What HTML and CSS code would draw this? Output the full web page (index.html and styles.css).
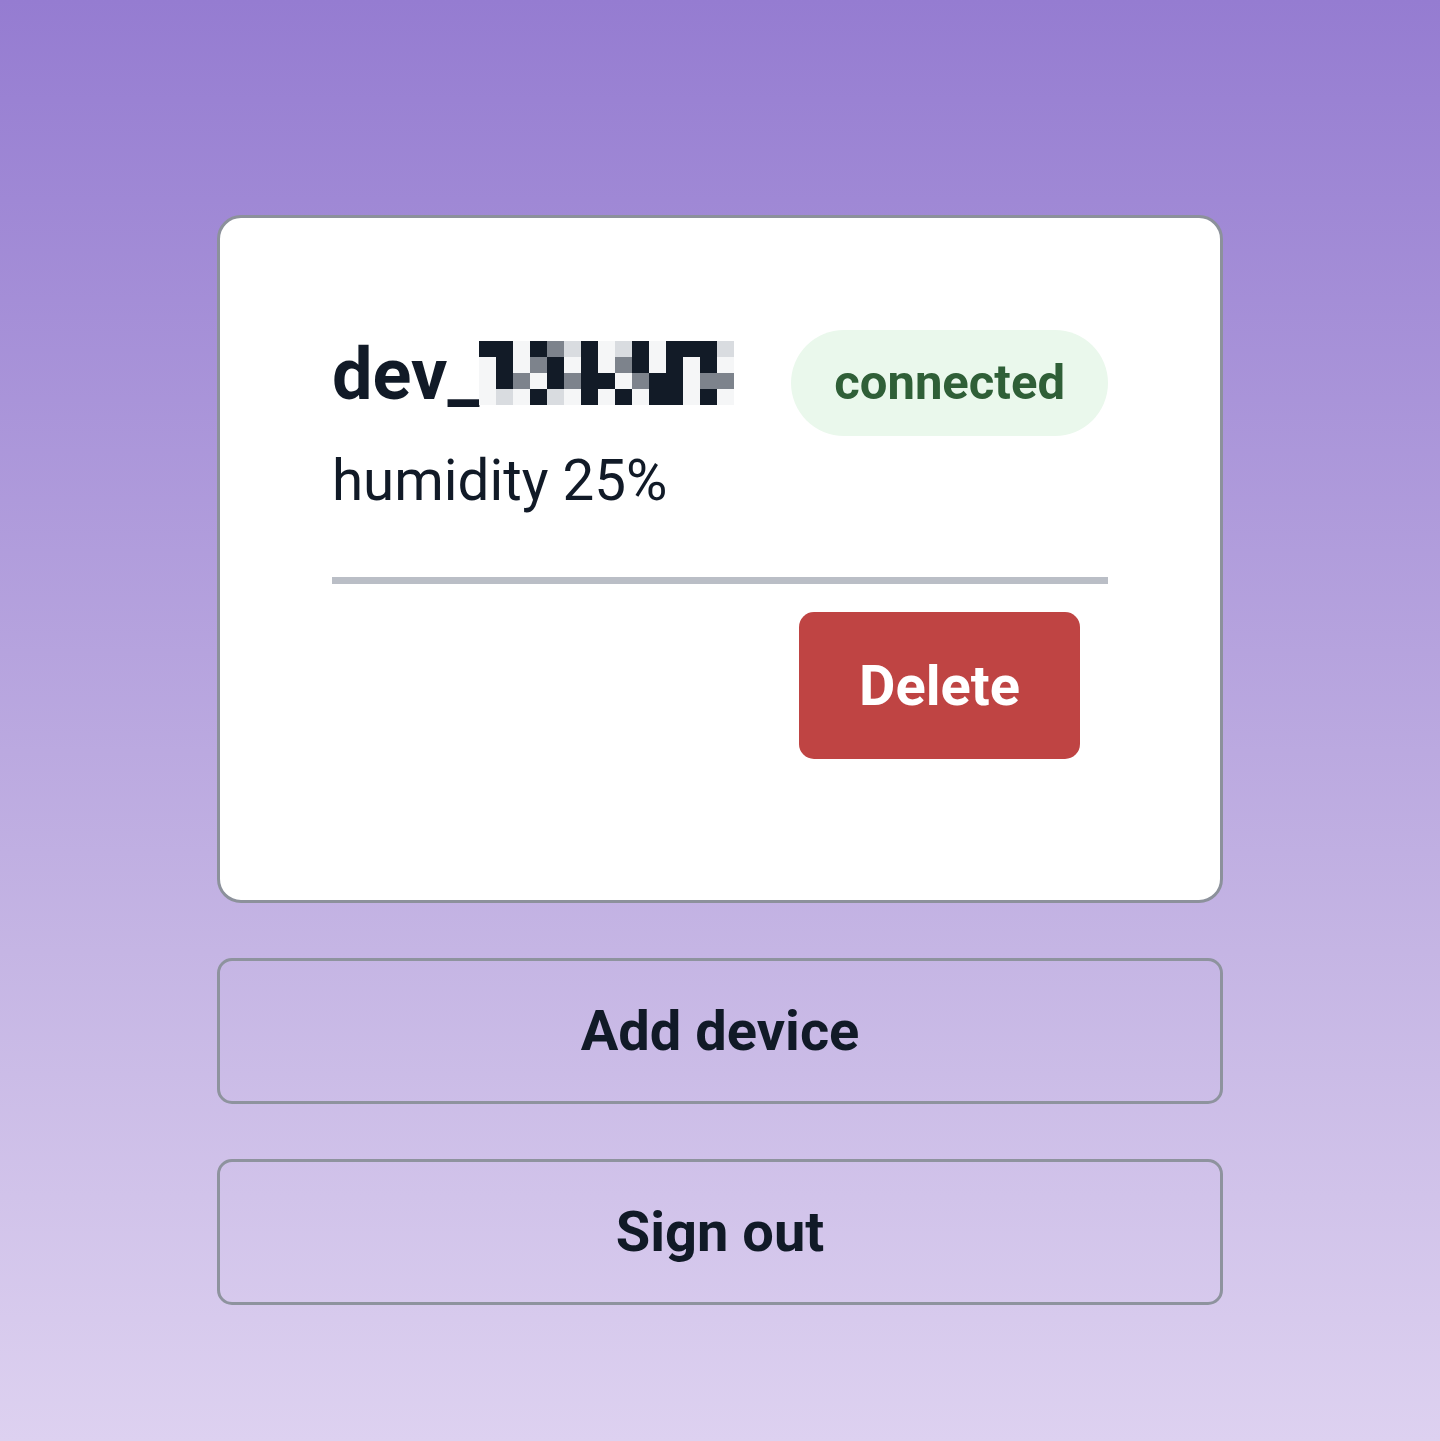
FILE: index.html
```html
<!DOCTYPE html>
<html lang="en">
<head>
<meta charset="utf-8">
<title>Devices</title>
<link rel="stylesheet" href="styles.css">
</head>
<body>
<main class="page">
  <section class="card">
    <div class="head">
      <h1 class="title">dev_<span class="mosaic" aria-label="hidden id">
        <i class="k"></i><i class="k"></i><i class="w"></i><i class="k"></i><i class="g"></i><i class="l"></i><i class="k"></i><i class="w"></i><i class="l"></i><i class="k"></i><i class="w"></i><i class="k"></i><i class="k"></i><i class="k"></i><i class="l"></i>
        <i class="w"></i><i class="k"></i><i class="w"></i><i class="g"></i><i class="k"></i><i class="w"></i><i class="k"></i><i class="w"></i><i class="g"></i><i class="k"></i><i class="w"></i><i class="k"></i><i class="w"></i><i class="k"></i><i class="w"></i>
        <i class="w"></i><i class="k"></i><i class="g"></i><i class="w"></i><i class="k"></i><i class="g"></i><i class="k"></i><i class="k"></i><i class="w"></i><i class="g"></i><i class="k"></i><i class="k"></i><i class="w"></i><i class="g"></i><i class="g"></i>
        <i class="w"></i><i class="l"></i><i class="w"></i><i class="k"></i><i class="l"></i><i class="w"></i><i class="k"></i><i class="w"></i><i class="k"></i><i class="w"></i><i class="k"></i><i class="k"></i><i class="w"></i><i class="k"></i><i class="w"></i>
      </span></h1>
      <span class="chip">connected</span>
    </div>
    <p class="reading">humidity 25%</p>
    <hr class="divider">
    <div class="actions">
      <button class="danger" type="button">Delete</button>
    </div>
  </section>
  <button class="outline" type="button">Add device</button>
  <button class="outline" type="button">Sign out</button>
</main>
</body>
</html>
```

FILE: styles.css
```css
* { box-sizing: border-box; }

html, body {
  margin: 0;
  padding: 0;
}

body {
  min-height: 1441px;
  background: linear-gradient(180deg, #957cd1 0%, #c5b5e4 66%, #ddd1f0 100%);
  font-family: Roboto, "Noto Sans", "Liberation Sans", sans-serif;
  color: #111a27;
}

.page {
  width: 1006px;
  margin: 0 auto;
  padding-top: 215px;
  display: flex;
  flex-direction: column;
  gap: 55px;
}

.card {
  background: #ffffff;
  border: 3px solid #8c919b;
  border-radius: 24px;
  padding: 112px 112px 113px 112px;
}

.head {
  display: flex;
  align-items: center;
  gap: 56px;
}

.title {
  margin: 0 0 16px;
  font-size: 72px;
  font-weight: 700;
  line-height: 84px;
  color: #111a27;
  display: flex;
  align-items: center;
}

.mosaic {
  display: grid;
  grid-template-columns: repeat(15, 17px);
  grid-template-rows: repeat(4, 16px);
  margin-bottom: 4px;
}

.mosaic i { display: block; }
.mosaic .k { background: #121b27; }
.mosaic .g { background: #7d838c; }
.mosaic .l { background: #d9dce0; }
.mosaic .w { background: #f5f6f7; }

.chip {
  margin-left: auto;
  flex-shrink: 0;
  background: #eaf8ec;
  color: #2f5f37;
  font-size: 49px;
  font-weight: 700;
  line-height: 58px;
  padding: 24px 43px;
  border-radius: 60px;
}

.reading {
  margin: 10px 0 0;
  font-size: 56.5px;
  line-height: 70px;
  color: #111a27;
}

.divider {
  margin: 61px 0 0;
  border: 0;
  height: 7px;
  background: #babec6;
}

.actions {
  display: flex;
  justify-content: flex-end;
}

.danger {
  margin: 28px;
  width: 281px;
  height: 147px;
  border: 0;
  border-radius: 15px;
  background: #bf4443;
  color: #ffffff;
  font-family: inherit;
  font-size: 56px;
  font-weight: 700;
}

.outline {
  height: 146px;
  background: transparent;
  border: 3px solid #8e939e;
  border-radius: 15px;
  font-family: inherit;
  font-size: 56px;
  font-weight: 700;
  color: #111a27;
}
```
